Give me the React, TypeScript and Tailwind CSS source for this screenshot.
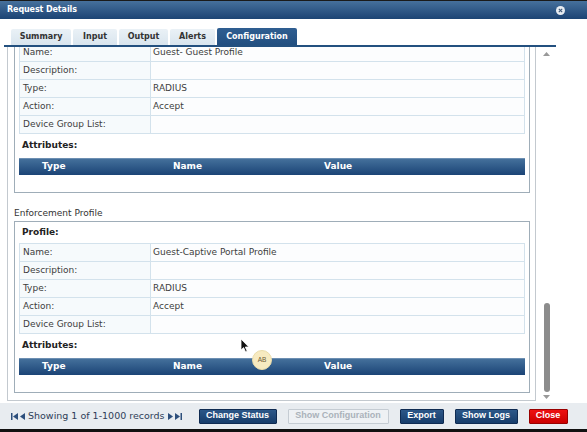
import React from 'react'

const body = "font-['DejaVu_Sans',Verdana,sans-serif]"
const btnFont = "font-['Liberation_Sans',Arial,sans-serif]"

const profileRows = (name: string): [string, string][] => [
  ['Name:', name],
  ['Description:', ''],
  ['Type:', 'RADIUS'],
  ['Action:', 'Accept'],
  ['Device Group List:', ''],
]

function InfoTable({ rows }: { rows: [string, string][] }) {
  return (
    <div className="border-t border-l border-[#d3e2ec]">
      {rows.map(([k, v]) => (
        <div key={k} className="flex h-[18px] border-b border-r border-[#d3e2ec]">
          <div className="w-[131px] border-r border-[#d3e2ec] bg-[#f6fafc] pl-[3px] flex items-center">{k}</div>
          <div className="flex-1 pl-[2px] flex items-center bg-[#fcfdfe]">{v}</div>
        </div>
      ))}
    </div>
  )
}

function ProfileBox({ name }: { name: string }) {
  return (
    <div className="border border-[#9fadb8] px-[4px] h-[172px]">
      <div className="h-[21px] flex items-center pl-[3px] font-bold text-[#222]">Profile:</div>
      <InfoTable rows={profileRows(name)} />
      <div className="h-[24px] flex items-center pl-[3px] font-bold text-[#222]">Attributes:</div>
      <div className="h-[17px] flex items-center pl-[23px] bg-linear-to-b from-[#44709b] to-[#1b4476] border-t border-[#6d8fb2] text-white font-bold">
        <span className="w-[131px]">Type</span>
        <span className="w-[151px]">Name</span>
        <span>Value</span>
      </div>
    </div>
  )
}

function Btn({ label, w, kind = 'dark' }: { label: string; w: string; kind?: 'dark' | 'off' | 'red' }) {
  const look =
    kind === 'dark'
      ? 'bg-linear-to-b from-[#2c5788] to-[#173d6b] border-[#0f2b52] text-white'
      : kind === 'red'
        ? 'bg-linear-to-b from-[#ee1111] to-[#cc0000] border-[#990000] text-white'
        : 'bg-[#eef1f4] border-[#c5ccd3] text-[#aab2ba]'
  return (
    <div className={`${w} h-[15px] border rounded-[1px] flex items-center justify-center font-bold text-[9px] ${btnFont} ${look}`}>
      {label}
    </div>
  )
}

function Tri({ dir }: { dir: 'l' | 'r' }) {
  return (
    <svg width="5" height="7" viewBox="0 0 5 7">
      <path d={dir === 'l' ? 'M5 0 L0 3.5 L5 7 Z' : 'M0 0 L5 3.5 L0 7 Z'} fill="#2d4f7c" />
    </svg>
  )
}

function Edge({ dir }: { dir: 'l' | 'r' }) {
  return (
    <svg width="7" height="7" viewBox="0 0 7 7">
      {dir === 'l' ? (
        <>
          <rect x="0" y="0" width="1.5" height="7" fill="#2d4f7c" />
          <path d="M7 0 L2 3.5 L7 7 Z" fill="#2d4f7c" />
        </>
      ) : (
        <>
          <path d="M0 0 L5 3.5 L0 7 Z" fill="#2d4f7c" />
          <rect x="5.5" y="0" width="1.5" height="7" fill="#2d4f7c" />
        </>
      )}
    </svg>
  )
}

export default function App() {
  const tabs = [
    { label: 'Summary', w: 'w-[60px]' },
    { label: 'Input', w: 'w-[44px]' },
    { label: 'Output', w: 'w-[49px]' },
    { label: 'Alerts', w: 'w-[45px]' },
  ]

  return (
    <div className={`relative w-[587px] h-[432px] bg-white overflow-hidden text-[9px] text-[#3d3d3d] ${body}`}>
      {/* title bar */}
      <div className="h-[19px] border-t border-[#1a1a1a] bg-linear-to-b from-[#46709c] to-[#1c4474] flex items-center justify-between pl-[7px] pr-[22px]">
        <span className="text-white font-bold text-[8px] tracking-[-0.1px]">Request Details</span>
        <span className="w-[9px] h-[9px] rounded-full bg-[#e8edf2] flex items-center justify-center">
          <svg width="5" height="5" viewBox="0 0 5 5">
            <path d="M0.8 0.8 L4.2 4.2 M4.2 0.8 L0.8 4.2" stroke="#3b5575" strokeWidth="1.1" />
          </svg>
        </span>
      </div>

      <div className="w-[552px] ml-[4px] mt-[9px]">
        {/* tabs */}
        <div className="flex gap-[2px] pl-[7px] h-[17px] items-end border-b-2 border-[#23507f] box-content">
          {tabs.map((t) => (
            <div
              key={t.label}
              className={`${t.w} h-[16px] rounded-t-[2px] bg-linear-to-b from-[#eaf1f6] to-[#d9e5ee] flex items-center justify-center font-bold text-[8px] text-[#333]`}
            >
              {t.label}
            </div>
          ))}
          <div className="w-[80px] h-[17px] rounded-t-[2px] bg-linear-to-b from-[#2f5e91] to-[#224f80] flex items-center justify-center font-bold text-[8px] text-white">
            Configuration
          </div>
        </div>

        <div className="flex h-[354px]">
          {/* scrolled panel */}
          <div className="ml-[3px] w-[529px] border-l border-r border-b border-[#c3c9cf] overflow-hidden">
            <div className="-mt-[26px] pl-[6px] pr-[5px]">
              <ProfileBox name="Guest- Guest Profile" />
              <div className="h-[28px] flex items-end pb-[1px] text-[#333]">Enforcement Profile</div>
              <ProfileBox name="Guest-Captive Portal Profile" />
            </div>
          </div>
          {/* scrollbar */}
          <div className="flex-1 flex flex-col items-center pt-[5px] pb-[2px]">
            <svg width="7" height="4" viewBox="0 0 7 4">
              <path d="M0 4 L3.5 0 L7 4 Z" fill="#999" />
            </svg>
            <div className="flex-1" />
            <div className="w-[6px] h-[89px] rounded-[3px] bg-[#8c8c8c] ml-[1px]" />
            <svg className="mt-[3px]" width="7" height="4" viewBox="0 0 7 4">
              <path d="M0 0 L3.5 4 L7 0 Z" fill="#999" />
            </svg>
          </div>
        </div>
      </div>

      {/* footer */}
      <div className="mt-[2px] h-[26px] bg-[#e8ecf0] flex items-center pl-[11px]">
        <div className="flex items-center gap-[2px] text-[9.5px] text-[#2e3d58]">
          <Edge dir="l" />
          <Tri dir="l" />
          <span className="px-[1px]">Showing 1 of 1-1000 records</span>
          <Tri dir="r" />
          <Edge dir="r" />
        </div>
        <div className="flex items-center gap-[11px] ml-[17px]">
          <Btn label="Change Status" w="w-[78px]" />
          <Btn label="Show Configuration" w="w-[101px]" kind="off" />
          <Btn label="Export" w="w-[44px]" />
          <Btn label="Show Logs" w="w-[63px]" />
          <Btn label="Close" w="w-[39px]" kind="red" />
        </div>
      </div>
      <div className="h-[3px] bg-[#111]" />

      {/* mouse cursor + avatar bubble */}
      <svg className="absolute left-[240px] top-[338px]" width="10" height="15" viewBox="0 0 10 15">
        <path d="M1 1 L1 12 L3.6 9.6 L5.6 14 L7.2 13.3 L5.3 9 L8.8 9 Z" fill="#111" stroke="#fff" strokeWidth="0.8" />
      </svg>
      <div className="absolute left-[252px] top-[350px] w-[20px] h-[20px] rounded-full bg-[#f7eac0] border border-[#eadcaa] flex items-center justify-center text-[6.5px] text-[#6b5a35] font-['Liberation_Sans',Arial,sans-serif]">
        AB
      </div>
    </div>
  )
}
